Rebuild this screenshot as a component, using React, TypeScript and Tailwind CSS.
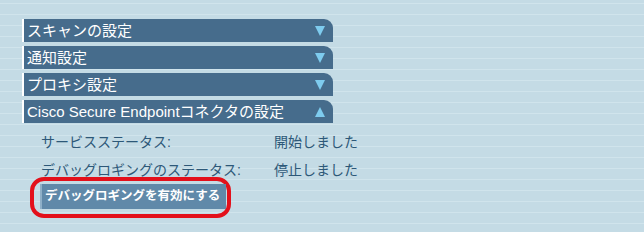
import React from "react";

const font = { fontFamily: '"Liberation Sans", "Noto Sans CJK JP", sans-serif' };

function Arrow({ up }: { up?: boolean }) {
  return (
    <svg width="10" height="10" viewBox="0 0 10 10" className="shrink-0">
      <polygon points={up ? "5,0 10,10 0,10" : "0,0 10,0 5,10"} fill="#7ecbee" />
    </svg>
  );
}

function SectionBar({ title, open }: { title: string; open?: boolean }) {
  return (
    <div className="flex h-[23px] w-[311px] items-center border-l-2 border-white bg-[#466c8c] pl-[3px] pr-[8px] rounded-tr-[9px]">
      <span className="flex-1 text-[15px] leading-none text-white">{title}</span>
      <Arrow up={open} />
    </div>
  );
}

export default function App() {
  const sections = ["スキャンの設定", "通知設定", "プロキシ設定"];
  return (
    <div
      className="h-[232px] w-[644px] overflow-hidden bg-[repeating-linear-gradient(to_bottom,#c4dbe5_0px,#c4dbe5_3px,#d0e4ec_3px,#d0e4ec_4px,#c4dbe5_4px,#c4dbe5_11px)] pl-[22px] pt-[19px]"
      style={font}
    >
      <div className="flex flex-col gap-[4px]">
        {sections.map(s => <SectionBar key={s} title={s} />)}
        <SectionBar title="Cisco Secure Endpointコネクタの設定" open />
      </div>
      <div className="mt-[10px] pl-[19px] text-[14px] leading-none text-[#2d5878]">
        <div className="flex h-[18px] items-center">
          <span className="w-[233px]">サービスステータス:</span>
          <span>開始しました</span>
        </div>
        <div className="mt-[10px] flex h-[18px] items-center">
          <span className="w-[233px]">デバッグロギングのステータス:</span>
          <span>停止しました</span>
        </div>
      </div>
      <div className="mt-[-2px] ml-[8px] inline-flex rounded-[14px] border-4 border-[#e3101b] pl-[6px] pr-[1px] pt-[3px] pb-[5px]">
        <button
          type="button"
          className="h-[25px] w-[186px] whitespace-nowrap border-l-2 border-[#8fb0c8] bg-[#6089a9] pl-[3px] text-left text-[12.5px] font-bold leading-none text-white"
        >
          デバッグロギングを有効にする
        </button>
      </div>
    </div>
  );
}
